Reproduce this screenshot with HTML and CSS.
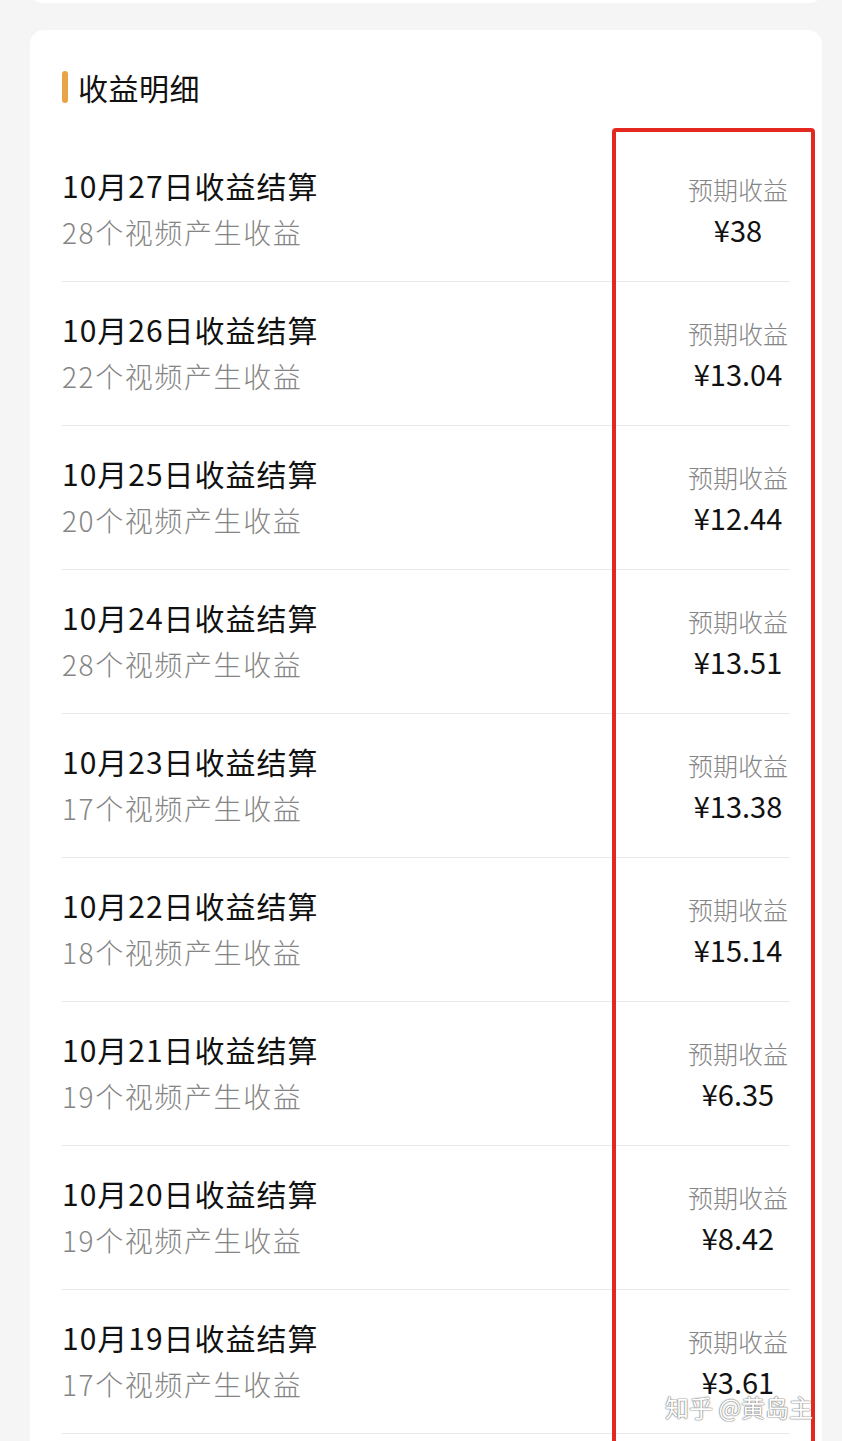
FILE: index.html
```html
<!DOCTYPE html>
<html lang="zh-CN">
<head>
<meta charset="utf-8">
<title>收益明细</title>
<link rel="stylesheet" href="styles.css">
</head>
<body>
<div class="page">
  <div class="top-card"></div>
  <section class="card">
    <h2 class="heading"><span class="bar"></span>收益明细</h2>
    <ul class="list">
      <li class="row"><div class="info"><div class="title">10月27日收益结算</div><div class="sub">28个视频产生收益</div></div><div class="money"><div class="label">预期收益</div><div class="amount">¥38</div></div></li>
      <li class="row"><div class="info"><div class="title">10月26日收益结算</div><div class="sub">22个视频产生收益</div></div><div class="money"><div class="label">预期收益</div><div class="amount">¥13.04</div></div></li>
      <li class="row"><div class="info"><div class="title">10月25日收益结算</div><div class="sub">20个视频产生收益</div></div><div class="money"><div class="label">预期收益</div><div class="amount">¥12.44</div></div></li>
      <li class="row"><div class="info"><div class="title">10月24日收益结算</div><div class="sub">28个视频产生收益</div></div><div class="money"><div class="label">预期收益</div><div class="amount">¥13.51</div></div></li>
      <li class="row"><div class="info"><div class="title">10月23日收益结算</div><div class="sub">17个视频产生收益</div></div><div class="money"><div class="label">预期收益</div><div class="amount">¥13.38</div></div></li>
      <li class="row"><div class="info"><div class="title">10月22日收益结算</div><div class="sub">18个视频产生收益</div></div><div class="money"><div class="label">预期收益</div><div class="amount">¥15.14</div></div></li>
      <li class="row"><div class="info"><div class="title">10月21日收益结算</div><div class="sub">19个视频产生收益</div></div><div class="money"><div class="label">预期收益</div><div class="amount">¥6.35</div></div></li>
      <li class="row"><div class="info"><div class="title">10月20日收益结算</div><div class="sub">19个视频产生收益</div></div><div class="money"><div class="label">预期收益</div><div class="amount">¥8.42</div></div></li>
      <li class="row"><div class="info"><div class="title">10月19日收益结算</div><div class="sub">17个视频产生收益</div></div><div class="money"><div class="label">预期收益</div><div class="amount">¥3.61</div></div></li>
    </ul>
    <div class="highlight"></div>
  </section>
  <div class="watermark">知乎 @黄岛主</div>
</div>
</body>
</html>
```

FILE: styles.css
```css
html, body {
  margin: 0;
  padding: 0;
  background: #f5f5f5;
  font-family: "Noto Sans CJK SC", "Noto Sans", sans-serif;
  color: #111;
}
.page {
  position: relative;
  height: 1441px;
  overflow: hidden;
}
.top-card {
  margin: -11px 20px 0 30px;
  height: 14px;
  background: #fff;
  border-radius: 0 0 12px 12px;
}
.card {
  position: relative;
  margin: 27px 20px 0 30px;
  background: #fff;
  border-radius: 14px;
  padding: 0 32px 40px;
}
.heading {
  margin: 0;
  padding: 40px 0 34px;
  display: flex;
  align-items: center;
  gap: 10px;
  height: 34px;
  font-size: 30px;
  font-weight: 400;
  line-height: 34px;
  letter-spacing: 0.5px;
  color: #111;
}
.bar {
  width: 6px;
  height: 32px;
  border-radius: 3px;
  background: #e9a447;
}
.list {
  list-style: none;
  margin: 0;
  padding: 0;
}
.row {
  display: flex;
  justify-content: space-between;
  height: 143px;
  border-bottom: 1px solid #e9e9e9;
}
.info {
  padding-top: 27px;
}
.title {
  font-size: 30px;
  font-weight: 400;
  line-height: 40px;
  letter-spacing: 1px;
  color: #111;
}
.sub {
  margin-top: 7px;
  font-size: 28px;
  font-weight: 300;
  line-height: 40px;
  letter-spacing: 1.6px;
  color: #858585;
}
.money {
  width: 104px;
  padding-top: 34px;
  text-align: center;
}
.label {
  font-size: 25px;
  font-weight: 300;
  line-height: 34px;
  color: #858585;
}
.amount {
  margin-top: 3px;
  font-size: 29px;
  font-weight: 400;
  line-height: 40px;
  color: #111;
}
.highlight {
  position: absolute;
  left: 582px;
  top: 98px;
  width: 195px;
  height: 1400px;
  border: 4px solid #e3281f;
  border-radius: 4px;
}
.watermark {
  position: absolute;
  left: 665px;
  top: 1390px;
  font-size: 24px;
  line-height: 34px;
  color: #fff;
  text-shadow: 0 0 1px #777, 0 0 1px #777, 0 0 2px #999;
}
```
